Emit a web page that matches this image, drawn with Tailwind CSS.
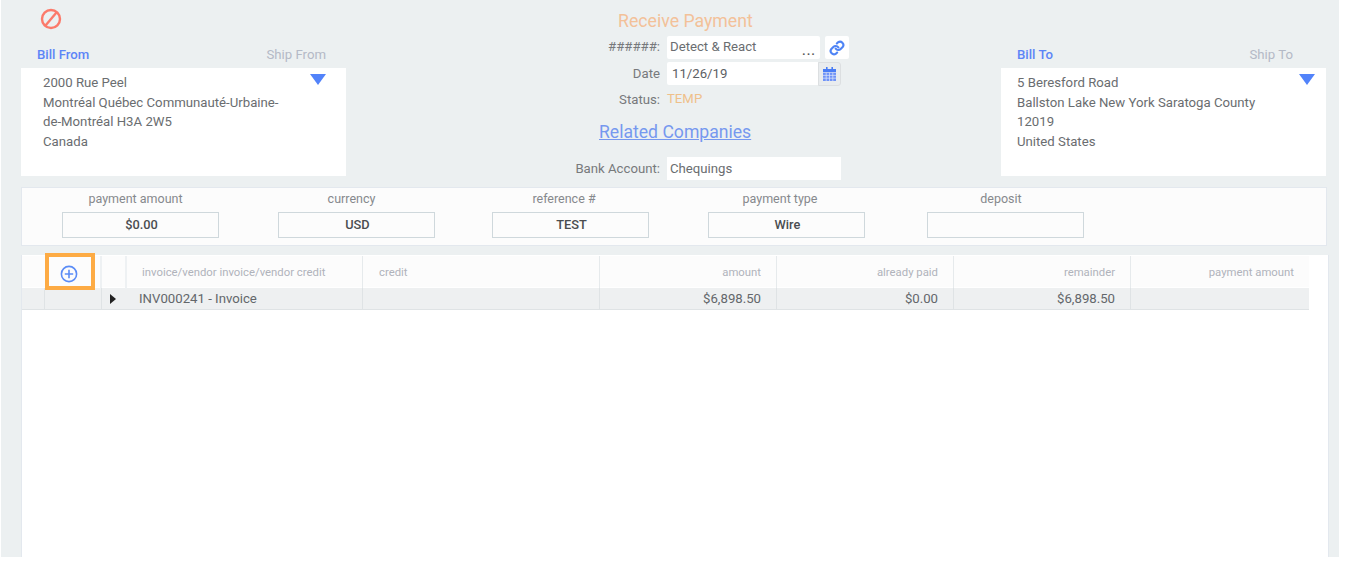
<!DOCTYPE html>
<html lang="en">
<head>
  <meta charset="UTF-8" />
  <title>Receive Payment</title>
  <script src="https://cdn.jsdelivr.net/npm/@tailwindcss/browser@4"></script>
</head>
<body class="bg-white font-['Roboto',sans-serif] text-[13.2px] text-[#6a6d70] overflow-hidden">

  <div class="ml-px w-[1338px] h-[557px] bg-[#ecf0f1] flex flex-col overflow-hidden">

    <!-- Header -->
    <div class="h-[187px] pl-5 pr-3 flex">
      <!-- Bill from -->
      <div class="w-[325px]">
        <div class="h-[45px] pl-[19px] pt-[8px]">
          <svg class="w-[22px] h-[22px]" viewBox="0 0 22 22" fill="none" stroke="#fb7a6b" stroke-width="2.4">
            <circle cx="11" cy="11" r="9"/>
            <path d="M5.5 17.5 16.5 4.5"/>
          </svg>
        </div>
        <div class="h-[23px] pl-4 pr-5 flex justify-between">
          <span class="font-medium text-[#5c85f7]">Bill From</span>
          <span class="text-[#b4b9c6]">Ship From</span>
        </div>
        <div class="relative w-[324.5px] h-[108px] bg-white pl-[22px] pt-[5px] leading-[19.5px]">
          <p>2000 Rue Peel</p>
          <p class="w-[245px]">Montréal Québec Communauté-Urbaine-de-Montréal H3A 2W5</p>
          <p>Canada</p>
          <span class="absolute right-5 top-[6px] w-0 h-0 border-x-[8.5px] border-x-transparent border-t-[11px] border-t-[#5283fa]"></span>
        </div>
      </div>

      <!-- Receive payment -->
      <div class="w-[655px] flex flex-col">
        <div class="h-[36px] pl-[272px] pt-[11px] text-[17.7px] leading-[20px] text-[#f3c199]">Receive Payment</div>
        <div class="h-[23px] flex items-center">
          <span class="w-[314px] text-right text-[#77797c] -mt-[1px]">######:</span>
          <div class="relative ml-[7px] w-[153px] h-[23px] bg-white rounded-[2px] pl-[3px] leading-[21px]">
            Detect &amp; React
            <span class="absolute right-[4px] top-[3px] text-[#555] font-medium leading-[23px] tracking-[1px]">...</span>
          </div>
          <div class="ml-[5px] w-6 h-[23px] bg-white rounded-[2px] flex items-center justify-center">
            <svg class="w-[16px] h-[16px]" viewBox="0 0 24 24" fill="none" stroke="#4f84f5" stroke-width="3.2" stroke-linecap="round" stroke-linejoin="round">
              <path d="M10 13a5 5 0 0 0 7.5.5l3-3a5 5 0 0 0-7-7l-1.7 1.7"/>
              <path d="M14 11a5 5 0 0 0-7.5-.5l-3 3a5 5 0 0 0 7 7l1.7-1.7"/>
            </svg>
          </div>
        </div>
        <div class="mt-[3px] h-[23px] flex items-center">
          <span class="w-[314px] text-right text-[#77797c]">Date</span>
          <div class="ml-[7px] w-[151px] h-[23px] bg-white rounded-l-[2px] pl-[5px] leading-[23px] text-[#5d6165]">11/26/19</div>
          <div class="w-[23px] h-[24px] bg-[#e9ecee] border border-[#dcdfe1] rounded-r-[3px] flex items-center justify-center">
            <svg class="w-[13px] h-[14px]" viewBox="0 0 13 14">
              <path fill="#4a7df5" d="M0 2h13v3H0z"/>
              <path fill="#4a7df5" d="M3 0h1.6v2H3zM8.4 0H10v2H8.4z"/>
              <path fill="#6f93f7" d="M0 5.6h13V14H0z"/>
              <path stroke="#dfe7fb" stroke-width=".7" d="M3.2 5.6V14M6.5 5.6V14M9.8 5.6V14M0 8.4h13M0 11.2h13"/>
            </svg>
          </div>
        </div>
        <div class="mt-[3px] h-[24px] flex items-center">
          <span class="w-[314px] text-right text-[#77797c]">Status:</span>
          <span class="ml-[7px] -mt-[3px] text-[#efc08a]">TEMP</span>
        </div>
        <div class="mt-[8px] h-[24px] pl-[253px]">
          <a class="text-[17.6px] leading-[24px] text-[#7698ef] underline">Related Companies</a>
        </div>
        <div class="mt-[13px] h-[23px] flex items-center">
          <span class="w-[314px] text-right text-[#77797c]">Bank Account:</span>
          <div class="ml-[7px] w-[174px] h-[23px] bg-white pl-[3px] leading-[23px]">Chequings</div>
        </div>
      </div>

      <!-- Bill to -->
      <div class="w-[325px]">
        <div class="h-[45px]"></div>
        <div class="h-[23px] pl-[16px] pr-[33px] flex justify-between">
          <span class="font-medium text-[#5c85f7]">Bill To</span>
          <span class="text-[#b4b9c6]">Ship To</span>
        </div>
        <div class="relative h-[108px] bg-white pl-[16px] pt-[5px] leading-[19.5px]">
          <p>5 Beresford Road</p>
          <p class="w-[250px]">Ballston Lake New York Saratoga County 12019</p>
          <p>United States</p>
          <span class="absolute right-[11px] top-[6px] w-0 h-0 border-x-[8.5px] border-x-transparent border-t-[11px] border-t-[#5283fa]"></span>
        </div>
      </div>
    </div>

    <!-- Payment fields -->
    <div class="ml-5 w-[1306px] h-[59px] bg-[#fcfcfc] border border-[#e3e8ee] flex pl-10 text-[12.5px]">
      <div class="w-[216px]">
        <p class="w-[147px] pt-[2px] h-[24px] text-center text-[#86898d]">payment amount</p>
        <div class="w-[157px] h-[26px] border border-[#cfd8dc] pl-[2px] text-center text-[12.8px] leading-[24px] font-medium text-[#4a4d50]">$0.00</div>
      </div>
      <div class="w-[214px]">
        <p class="w-[147px] pt-[2px] h-[24px] text-center text-[#86898d]">currency</p>
        <div class="w-[157px] h-[26px] border border-[#cfd8dc] pl-[2px] text-center text-[12.8px] leading-[24px] font-medium text-[#4a4d50]">USD</div>
      </div>
      <div class="w-[216px]">
        <p class="w-[144px] pt-[2px] h-[24px] text-center text-[#86898d]">reference #</p>
        <div class="w-[157px] h-[26px] border border-[#cfd8dc] pl-[2px] text-center text-[12.8px] leading-[24px] font-medium text-[#4a4d50]">TEST</div>
      </div>
      <div class="w-[219px]">
        <p class="w-[144px] pt-[2px] h-[24px] text-center text-[#86898d]">payment type</p>
        <div class="w-[157px] h-[26px] border border-[#cfd8dc] pl-[2px] text-center text-[12.8px] leading-[24px] font-medium text-[#4a4d50]">Wire</div>
      </div>
      <div class="w-[158px]">
        <p class="w-[148px] pt-[2px] h-[24px] text-center text-[#86898d]">deposit</p>
        <div class="w-[157px] h-[26px] border border-[#cfd8dc]"></div>
      </div>
    </div>

    <!-- Lines table -->
    <div class="relative mt-[9px] ml-5 w-[1308px] flex-1 bg-white pt-px border-x border-[#e3e8ee]">
      <div class="grid grid-cols-[23px_57px_25px_236px_237px_177px_177px_177px_178px] w-[1287px] h-[31px] bg-[#fcfcfc] text-[11.33px] leading-[33px] text-[#b0b3bb]">
        <div></div>
        <div class="border-r-2 border-[#eef1f3] flex items-center justify-center">
          <svg class="w-[18px] h-[18px] mt-[2px] mr-[7px]" viewBox="0 0 18 18" fill="none" stroke="#5b8cf6" stroke-width="1.6">
            <circle cx="9" cy="9" r="7.6"/>
            <path d="M9 4.8v8.4M4.8 9h8.4"/>
          </svg>
        </div>
        <div class="border-r-2 border-[#eef1f3]"></div>
        <div class="border-r border-[#e6eaec] pl-[15px]">invoice/vendor invoice/vendor credit</div>
        <div class="border-r border-[#e6eaec] pl-[16px]">credit</div>
        <div class="border-r border-[#e6eaec] pr-[15px] text-right">amount</div>
        <div class="border-r border-[#e6eaec] pr-[15px] text-right">already paid</div>
        <div class="border-r border-[#e6eaec] pr-[15px] text-right">remainder</div>
        <div class="pr-[15px] text-right">payment amount</div>
      </div>
      <div class="mt-px grid grid-cols-[23px_57px_25px_236px_237px_177px_177px_177px_178px] w-[1287px] h-[22px] bg-[#eef0f1] border-b border-[#dfe3e5] leading-[22px] text-[#63676b]">
        <div class="border-r border-[#dfe3e5]"></div>
        <div class="border-r border-[#dfe3e5]"></div>
        <div class="flex items-center pl-[8px]">
          <span class="w-0 h-0 border-y-[5px] border-y-transparent border-l-[6px] border-l-[#222]"></span>
        </div>
        <div class="border-r border-[#dfe3e5] pl-[12px]">INV000241 - Invoice</div>
        <div class="border-r border-[#dfe3e5]"></div>
        <div class="border-r border-[#dfe3e5] pr-[15px] text-right">$6,898.50</div>
        <div class="border-r border-[#dfe3e5] pr-[15px] text-right">$0.00</div>
        <div class="border-r border-[#dfe3e5] pr-[15px] text-right">$6,898.50</div>
        <div></div>
      </div>
      <!-- orange highlight around the add button -->
      <div class="absolute left-[23px] -top-[2px] w-[50px] h-[37px] border-4 border-[#fdab44]"></div>
    </div>
  </div>

</body>
</html>
